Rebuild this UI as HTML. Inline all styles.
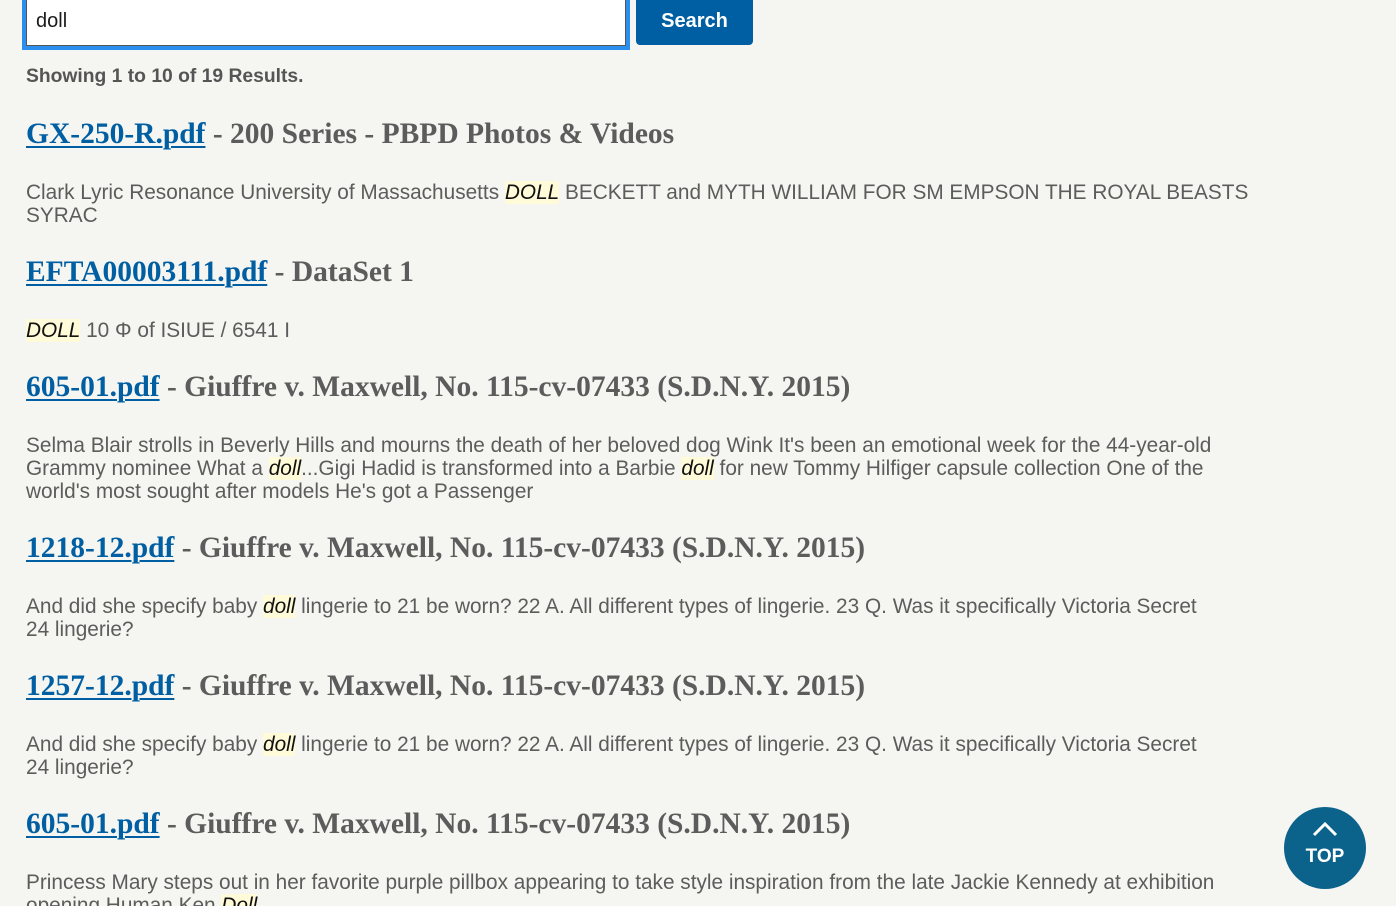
<!DOCTYPE html>
<html><head><meta charset="utf-8"><style>
html,body{margin:0;padding:0;background:#f5f5f1;width:1396px;height:906px;overflow:hidden;position:relative}
.in{position:absolute;left:22px;top:-6px;width:600px;height:48px;border:4px solid #2b8ff0;background:#fff;box-sizing:content-box}
.in div{position:absolute;left:0;top:0;right:0;bottom:0;border:1px solid #555;border-top:none}
.in span{position:absolute;left:10px;top:12px;font:20px "Liberation Sans",sans-serif;color:#1b1b1b}
.btn{position:absolute;left:636px;top:-6px;width:117px;height:51px;background:#005ea2;border-radius:4px;color:#fff;font:bold 20px "Liberation Sans",sans-serif;text-align:center;line-height:54px}
.show{position:absolute;left:26px;top:66px;font:bold 19.3px "Liberation Sans",sans-serif;color:#555}
h2{position:absolute;left:26px;margin:0;font:bold 29.5px "Liberation Serif",serif;color:#5c5c5c;white-space:nowrap;line-height:34px}
h2 a{color:#005ea2;text-decoration:underline;text-decoration-thickness:2px;text-underline-offset:3px}
p{position:absolute;left:26px;margin:0;font:20.8px "Liberation Sans",sans-serif;color:#5c5c5c;line-height:23px;white-space:nowrap}
em{background:#fffbd9;color:#111;font-style:italic}
.top{position:absolute;left:1284px;top:807px;width:82px;height:82px;border-radius:50%;background:#0b628a;color:#fff;text-align:center;font:bold 19px "Liberation Sans",sans-serif}
.top svg{position:absolute;left:28px;top:14px}
.top span{position:absolute;left:0;right:0;top:39px}
</style></head><body>
<div class="in"><div></div><span>doll</span></div>
<div class="btn">Search</div>
<div class="show">Showing 1 to 10 of 19 Results.</div>

<h2 style="top:117px"><a>GX-250-R.pdf</a> - 200 Series - PBPD Photos &amp; Videos</h2>
<p style="top:181px">Clark Lyric Resonance University of Massachusetts <em>DOLL</em> BECKETT and MYTH WILLIAM FOR SM EMPSON THE ROYAL BEASTS<br>SYRAC</p>

<h2 style="top:255px"><a>EFTA00003111.pdf</a> - DataSet 1</h2>
<p style="top:319px"><em>DOLL</em> 10 Φ of ISIUE / 6541 I</p>

<h2 style="top:370px"><a>605-01.pdf</a> - Giuffre v. Maxwell, No. 115-cv-07433 (S.D.N.Y. 2015)</h2>
<p style="top:434px">Selma Blair strolls in Beverly Hills and mourns the death of her beloved dog Wink It's been an emotional week for the 44-year-old<br>Grammy nominee What a <em>doll</em>...Gigi Hadid is transformed into a Barbie <em>doll</em> for new Tommy Hilfiger capsule collection One of the<br>world's most sought after models He's got a Passenger</p>

<h2 style="top:531px"><a>1218-12.pdf</a> - Giuffre v. Maxwell, No. 115-cv-07433 (S.D.N.Y. 2015)</h2>
<p style="top:595px">And did she specify baby <em>doll</em> lingerie to 21 be worn? 22 A. All different types of lingerie. 23 Q. Was it specifically Victoria Secret<br>24 lingerie?</p>

<h2 style="top:669px"><a>1257-12.pdf</a> - Giuffre v. Maxwell, No. 115-cv-07433 (S.D.N.Y. 2015)</h2>
<p style="top:733px">And did she specify baby <em>doll</em> lingerie to 21 be worn? 22 A. All different types of lingerie. 23 Q. Was it specifically Victoria Secret<br>24 lingerie?</p>

<h2 style="top:807px"><a>605-01.pdf</a> - Giuffre v. Maxwell, No. 115-cv-07433 (S.D.N.Y. 2015)</h2>
<p style="top:871px">Princess Mary steps out in her favorite purple pillbox appearing to take style inspiration from the late Jackie Kennedy at exhibition<br>opening Human Ken <em>Doll</em></p>

<div class="top"><svg width="26" height="16" viewBox="0 0 26 16"><path d="M2 14 L13 3 L24 14" fill="none" stroke="#fff" stroke-width="3"/></svg><span>TOP</span></div>
</body></html>
